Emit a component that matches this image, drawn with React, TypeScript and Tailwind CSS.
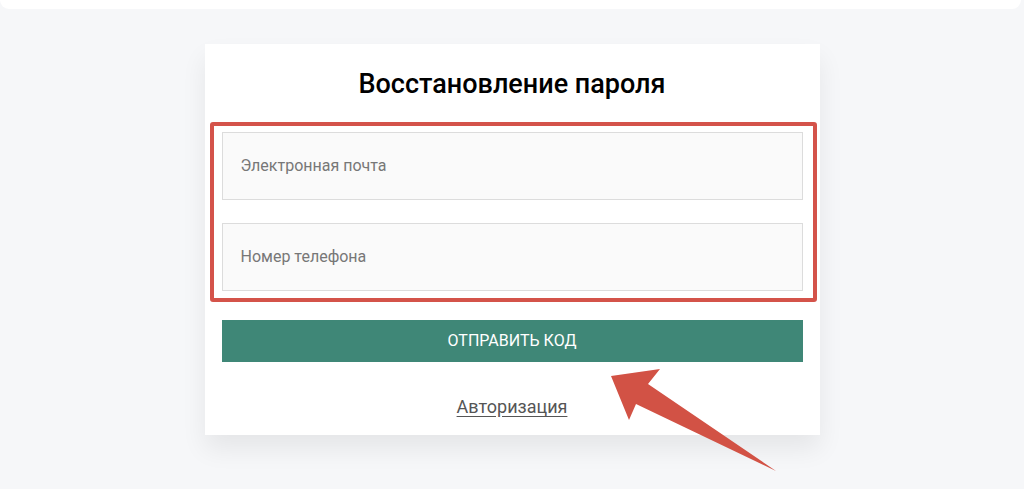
import React from "react";

export default function App() {
  return (
    <div
      className="relative min-h-[489px] w-full overflow-hidden bg-[#f6f7f9]"
      style={{ fontFamily: "Roboto, 'Liberation Sans', sans-serif" }}
    >
      <div className="mr-[3px] h-[9px] rounded-b-[9px] bg-white" />

      <div className="relative mx-auto mt-[35px] w-[615px] bg-white px-[17px] pb-[16px] pt-[25px] shadow-[0_14px_24px_rgba(0,0,0,0.07)]">
        <h1 className="text-center text-[27px] font-medium leading-[30px] text-black">
          Восстановление пароля
        </h1>

        <div className="mt-[33px] flex flex-col gap-[23px]">
          <div className="flex h-[68px] items-center border border-[#dcdcdc] bg-[#fafafa] pl-[18px] text-[16px] text-[#777]">
            Электронная почта
          </div>
          <div className="flex h-[68px] items-center border border-[#dcdcdc] bg-[#fafafa] pl-[18px] text-[16px] text-[#777]">
            Номер телефона
          </div>
        </div>

        <button className="mt-[29px] flex h-[42px] w-full items-center justify-center bg-[#3f8777] text-[16px] uppercase text-white">
          Отправить код
        </button>

        <div className="mt-[33px] text-center text-[18px] leading-[24px] text-[#555] underline underline-offset-[3px]">
          Авторизация
        </div>

        <div className="pointer-events-none absolute left-[5px] top-[78px] h-[180px] w-[607px] rounded-[3px] border-4 border-[#d4534a]" />
      </div>

      <svg
        className="pointer-events-none absolute left-0 top-0"
        width="1024"
        height="489"
        viewBox="0 0 1024 489"
      >
        <path
          d="M611,376 L660,369 L648,384 L776,471 L636,404 L629,420 Z"
          fill="#d25245"
        />
      </svg>
    </div>
  );
}
